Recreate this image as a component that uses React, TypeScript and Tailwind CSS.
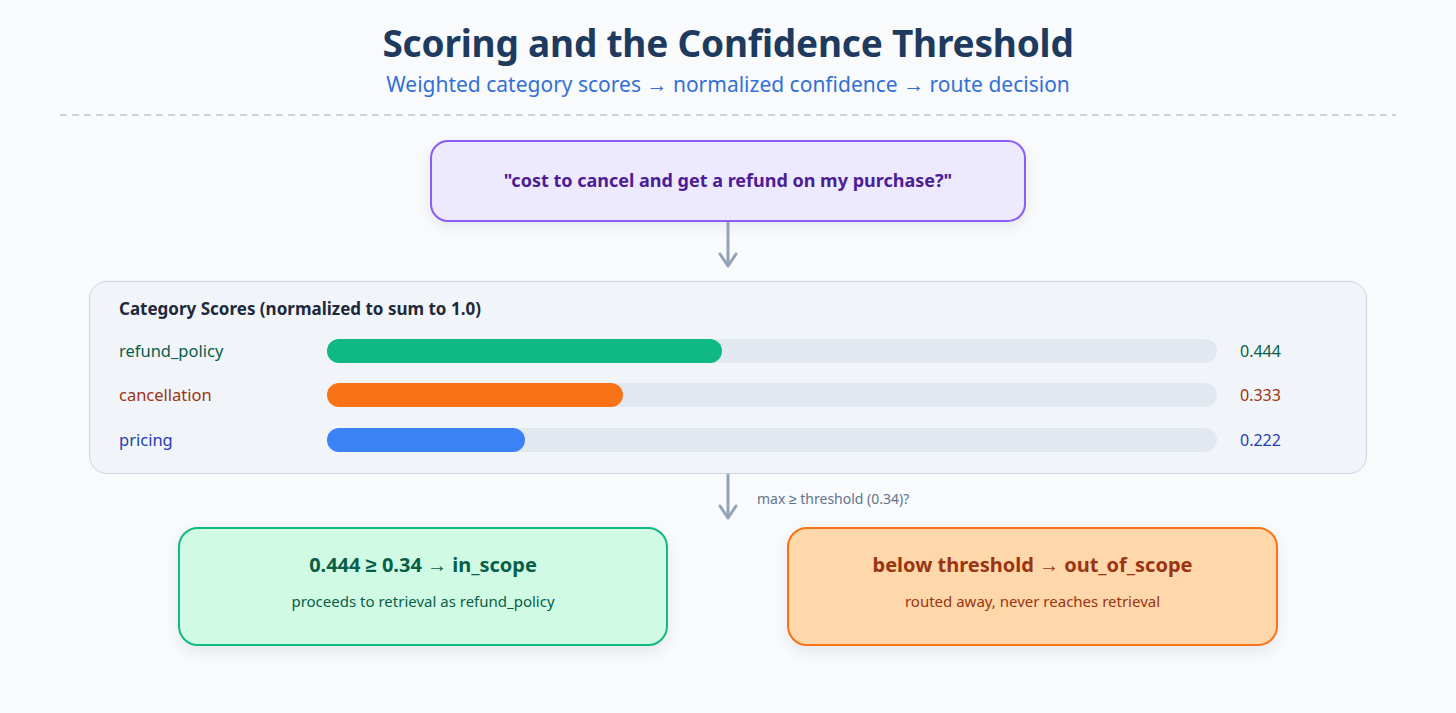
const scores = [
  { name: "refund_policy", value: 0.444, fill: "bg-[#10b981]", text: "text-[#065f46]" },
  { name: "cancellation", value: 0.333, fill: "bg-[#f97316]", text: "text-[#9a3412]" },
  { name: "pricing", value: 0.222, fill: "bg-[#3b82f6]", text: "text-[#1e40af]" },
];

const DownArrow = ({ height }: { height: number }) => (
  <svg width="24" height={height} viewBox={`0 0 24 ${height}`} className="block">
    <line x1="12" y1="0" x2="12" y2={height - 2} stroke="#94a3b8" strokeWidth="3" />
    <polyline
      points={`4,${height - 14} 12,${height - 2} 20,${height - 14}`}
      fill="none"
      stroke="#94a3b8"
      strokeWidth="3"
      strokeLinecap="round"
      strokeLinejoin="round"
    />
  </svg>
);

export default function App() {
  return (
    <div className="min-h-[713px] w-full bg-[#f8fafc] font-['Noto_Sans',sans-serif] pt-[20px]">
      <div className="text-center">
        <h1 className="text-[37px] leading-[46px] font-bold text-[#1e3a5f] tracking-[-0.2px]">
          Scoring and the Confidence Threshold
        </h1>
        <p className="mt-[3px] text-[21px] leading-[30px] text-[#3370d6]">
          Weighted category scores → normalized confidence → route decision
        </p>
      </div>

      <div className="mx-[60px] mt-[15px] h-[1.5px] bg-[repeating-linear-gradient(to_right,#cbd5e1_0_7px,transparent_7px_12px)]" />

      <div className="mx-auto mt-[24px] flex h-[82px] w-[596px] items-center justify-center rounded-[18px] border-2 border-[#8b5cf6] bg-[#ede9fe] shadow-[0_4px_14px_rgba(15,23,42,0.08)]">
        <span className="text-[18px] font-bold text-[#4c1d95]">
          "cost to cancel and get a refund on my purchase?"
        </span>
      </div>

      <div className="flex justify-center">
        <DownArrow height={46} />
      </div>

      <div className="mx-[89px] mt-[13px] rounded-[18px] border-[1.5px] border-[#cbd5e1] bg-[#f1f5f9] pl-[29px] pt-[15px] pb-[21px]">
        <h2 className="text-[17px] leading-[24px] font-bold text-[#1e293b]">
          Category Scores (normalized to sum to 1.0)
        </h2>
        <div className="mt-[18px] flex flex-col gap-[20.5px]">
          {scores.map((s) => (
            <div key={s.name} className="flex items-center">
              <span className={`w-[208px] text-[16.5px] leading-[24px] ${s.text}`}>{s.name}</span>
              <div className="h-[24px] w-[890px] rounded-full bg-[#e2e8f0]">
                <div
                  className={`h-full rounded-full ${s.fill}`}
                  style={{ width: `${s.value * 100}%` }}
                />
              </div>
              <span className={`ml-[23px] text-[16px] leading-[24px] ${s.text}`}>
                {s.value.toFixed(3)}
              </span>
            </div>
          ))}
        </div>
      </div>

      <div className="grid grid-cols-[1fr_24px_1fr]">
        <div />
        <DownArrow height={46} />
        <span className="ml-[17px] mt-[14px] text-[14px] leading-[22px] text-[#64748b]">
          max ≥ threshold (0.34)?
        </span>
      </div>

      <div className="mt-[7px] flex justify-center gap-[119px]">
        <div className="flex h-[119px] w-[490px] flex-col items-center rounded-[20px] border-2 border-[#10b981] bg-[#d1fae5] pt-[22px] shadow-[0_6px_16px_rgba(15,23,42,0.08)]">
          <span className="text-[20px] leading-[28px] font-bold text-[#065f46]">
            0.444 ≥ 0.34 → in_scope
          </span>
          <span className="mt-[11px] text-[15px] leading-[22px] text-[#065f46]">
            proceeds to retrieval as refund_policy
          </span>
        </div>
        <div className="flex h-[119px] w-[491px] flex-col items-center rounded-[20px] border-2 border-[#f97316] bg-[#fed7aa] pt-[22px] shadow-[0_6px_16px_rgba(15,23,42,0.08)]">
          <span className="text-[20px] leading-[28px] font-bold text-[#9a3412]">
            below threshold → out_of_scope
          </span>
          <span className="mt-[11px] text-[15px] leading-[22px] text-[#9a3412]">
            routed away, never reaches retrieval
          </span>
        </div>
      </div>
    </div>
  );
}
